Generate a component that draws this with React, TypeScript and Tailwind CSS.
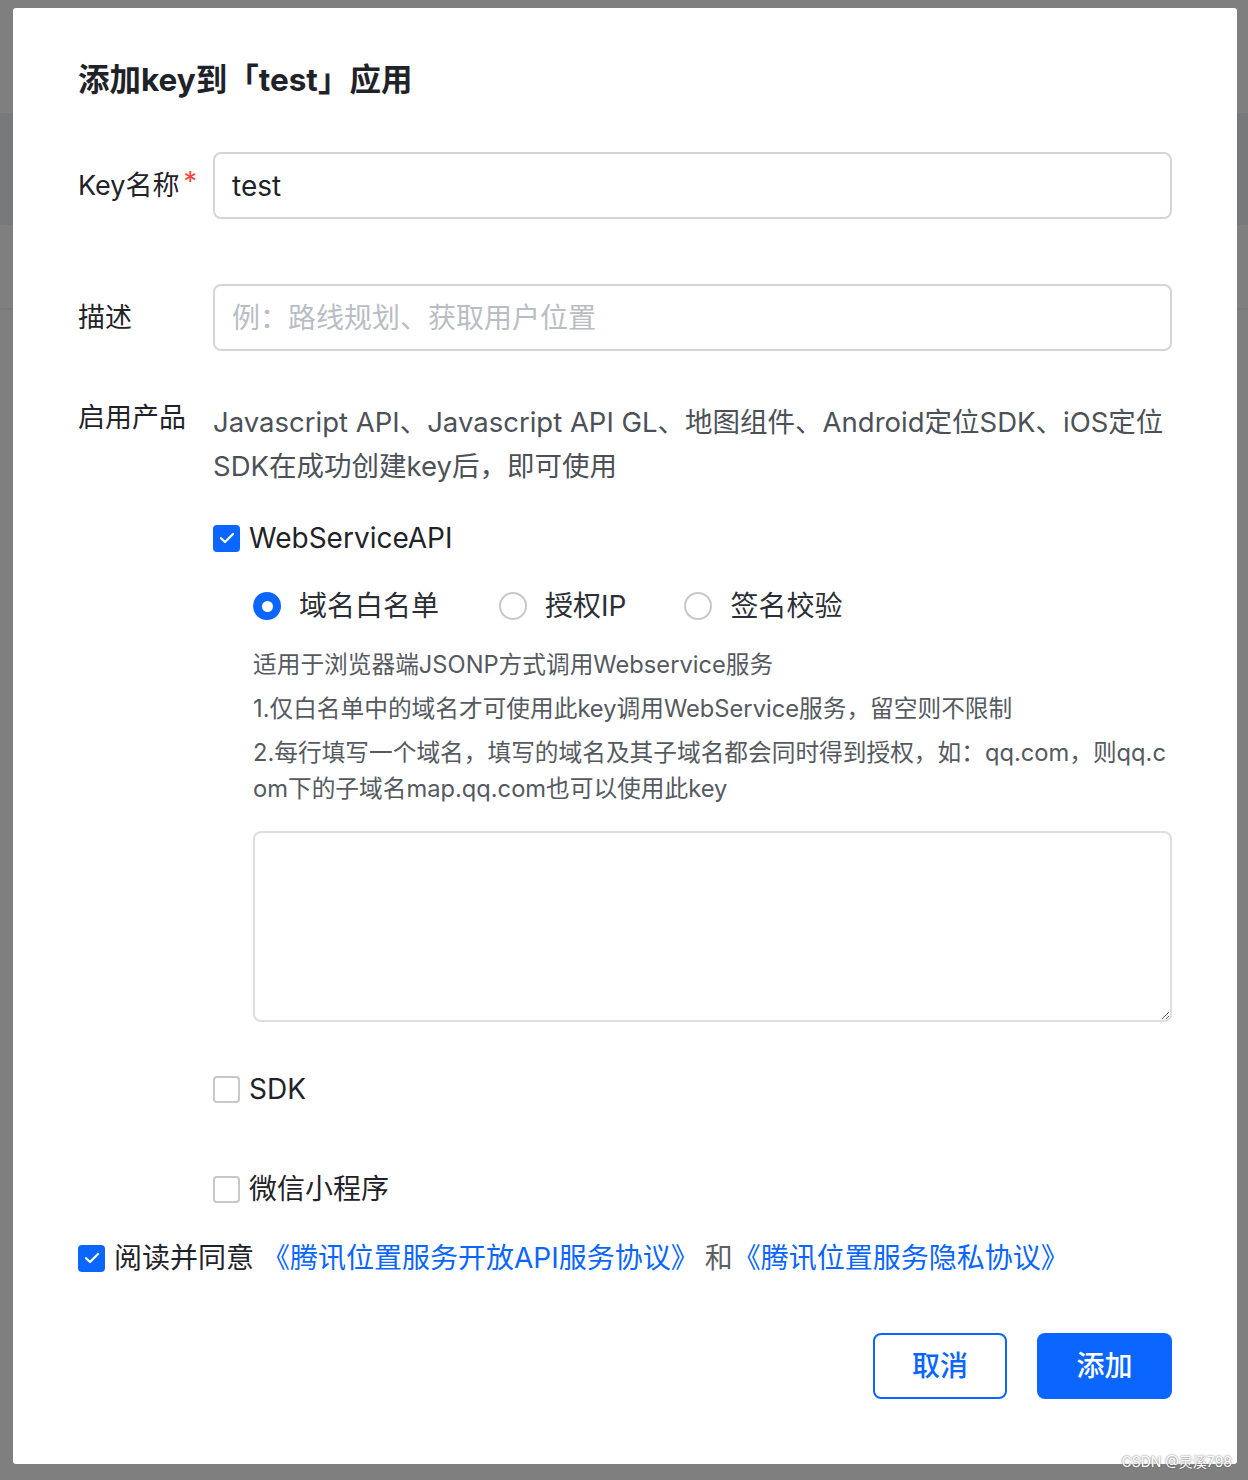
import React from "react";

const FONT = { fontFamily: 'Inter, "Noto Sans CJK SC", sans-serif' };

function Check({ checked }: { checked: boolean }) {
  return checked ? (
    <span className="flex h-[27px] w-[27px] shrink-0 items-center justify-center rounded-[4px] bg-[#0a66ff]">
      <svg width="16" height="12" viewBox="0 0 16 12" fill="none">
        <path d="M2 6.2 L6 10 L14 2" stroke="#fff" strokeWidth="2.2" strokeLinecap="round" strokeLinejoin="round" />
      </svg>
    </span>
  ) : (
    <span className="h-[27px] w-[27px] shrink-0 rounded-[4px] border-2 border-[#c6c8cc] bg-white" />
  );
}

function Radio({ checked, className = "" }: { checked: boolean; className?: string }) {
  return checked ? (
    <span className={`flex h-[28px] w-[28px] shrink-0 items-center justify-center rounded-full bg-[#0a66ff] ${className}`}>
      <span className="h-[11px] w-[11px] rounded-full bg-white" />
    </span>
  ) : (
    <span className={`block h-[28px] w-[28px] shrink-0 rounded-full border-2 border-[#c6c8cc] bg-white ${className}`} />
  );
}

export default function App() {
  return (
    <div
      style={FONT}
      className="relative h-[1480px] w-[1248px] bg-[#7f7f7f] bg-[linear-gradient(to_bottom,#7f7f7f_0,#7f7f7f_113px,#77797b_113px,#77797b_225px,#7f7f7f_225px,#7f7f7f_308px,#7a7a7a_308px,#7a7a7a_310px,#7f7f7f_310px)] pl-[13px] pt-[8px]"
    >
      <div className="h-[1456px] w-[1224px] rounded-[3px] bg-white px-[65px] pt-[50px] text-[#1f2329]">
        <div className="h-[44px] text-[31.5px] font-bold leading-[44px] text-[#1f2329]">
          添加key到「test」应用
        </div>

        {/* Key name */}
        <div className="mt-[50px] flex items-center">
          <div className="flex w-[135px] shrink-0 items-start text-[27px] leading-[36px]">
            <span>Key名称</span>
            <span className="ml-[4px] text-[#f5463c] leading-[28px]">*</span>
          </div>
          <input
            defaultValue="test"
            readOnly
            className="h-[67px] flex-1 rounded-[8px] border-2 border-[#d3d5d9] px-[17px] text-[28px] text-[#1f2329] outline-none"
            style={FONT}
          />
        </div>

        {/* Desc */}
        <div className="mt-[65px] flex items-center">
          <div className="w-[135px] shrink-0 text-[27px] leading-[36px]">描述</div>
          <input
            placeholder="例：路线规划、获取用户位置"
            readOnly
            className="h-[67px] flex-1 rounded-[8px] border-2 border-[#d3d5d9] px-[17px] text-[28px] outline-none placeholder:text-[#b9bdc4]"
            style={FONT}
          />
        </div>

        {/* Products */}
        <div className="mt-[49px] flex">
          <div className="w-[135px] shrink-0 text-[27px] leading-[36px]">启用产品</div>
          <div className="flex-1">
            <div className="whitespace-nowrap text-[27.5px] leading-[44px] text-[#4c5158]">
              <div>Javascript API、Javascript API GL、地图组件、Android定位SDK、iOS定位</div>
              <div>SDK在成功创建key后，即可使用</div>
            </div>

            <div className="mt-[28px] flex h-[44px] items-center gap-[9px] text-[28px]">
              <Check checked />
              <span>WebServiceAPI</span>
            </div>

            <div className="pl-[40px]">
              <div className="mt-[24px] flex h-[44px] items-center text-[28px] text-[#2b2f35]">
                <Radio checked />
                <span className="ml-[18px]">域名白名单</span>
                <Radio checked={false} className="ml-[60px]" />
                <span className="ml-[18px]">授权IP</span>
                <Radio checked={false} className="ml-[58px]" />
                <span className="ml-[18px]">签名校验</span>
              </div>

              <div className="mt-[19px] whitespace-nowrap text-[23.7px] leading-[36px] text-[#555a61]">
                <p>适用于浏览器端JSONP方式调用Webservice服务</p>
                <p className="mt-[8px]">1.仅白名单中的域名才可使用此key调用WebService服务，留空则不限制</p>
                <p className="mt-[8px]">
                  2.每行填写一个域名，填写的域名及其子域名都会同时得到授权，如：qq.com，则qq.c
                  <br />
                  om下的子域名map.qq.com也可以使用此key
                </p>
              </div>

              <textarea
                readOnly
                className="mt-[24px] block h-[191px] w-full rounded-[8px] border-2 border-[#dcdee3] outline-none"
              />
            </div>

            <div className="mt-[45px] flex h-[44px] items-center gap-[9px] text-[28px]">
              <Check checked={false} />
              <span>SDK</span>
            </div>

            <div className="mt-[56px] flex h-[44px] items-center gap-[9px] text-[28px]">
              <Check checked={false} />
              <span>微信小程序</span>
            </div>
          </div>
        </div>

        {/* Agreement */}
        <div className="mt-[25px] flex h-[44px] items-center whitespace-nowrap text-[28px]">
          <Check checked />
          <span className="ml-[9px]">阅读并同意</span>
          <span className="ml-[8px] text-[#0a66ff]">《腾讯位置服务开放API服务协议》</span>
          <span className="ml-[6px] text-[#5b5f66]">和</span>
          <span className="text-[#0a66ff]">《腾讯位置服务隐私协议》</span>
        </div>

        {/* Buttons */}
        <div className="mt-[53px] flex justify-end gap-[30px]">
          <button className="h-[66px] w-[134px] rounded-[8px] border-2 border-[#0a66ff] bg-white text-[28px] font-medium text-[#0a66ff]" style={FONT}>
            取消
          </button>
          <button className="h-[66px] w-[135px] rounded-[8px] bg-[#0a66ff] text-[28px] font-medium text-white" style={FONT}>
            添加
          </button>
        </div>
      </div>

      <div className="absolute right-[16px] top-[1452px] text-[14px] leading-[20px] text-white [text-shadow:0_0_2px_#555]">
        CSDN @灵溪798
      </div>
    </div>
  );
}
